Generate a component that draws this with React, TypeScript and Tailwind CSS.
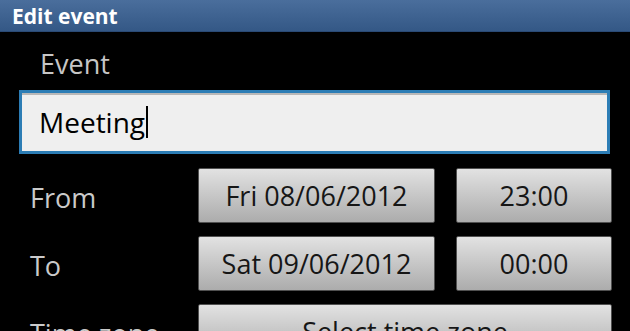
import React from "react";

const font = { fontFamily: '"Open Sans", "Noto Sans", sans-serif' };

function Btn({ children, className }: { children: React.ReactNode; className: string }) {
  return (
    <div
      className={
        "flex h-[55px] items-center justify-center rounded-[2px] border border-[#505050] bg-gradient-to-b from-[#e2e2e2] to-[#acacac] text-[27px] leading-[28px] text-[#161616] " +
        className
      }
    >
      {children}
    </div>
  );
}

function Row({ label, children }: { label: string; children: React.ReactNode }) {
  return (
    <div className="flex h-[55px] shrink-0 items-center">
      <div className="mt-[4px] w-[198px] shrink-0 pl-[30px] text-[27px] leading-[28px] text-[#cacaca]">{label}</div>
      <div className="flex flex-1 gap-[21px] pr-[18px]">{children}</div>
    </div>
  );
}

export default function App() {
  return (
    <div className="flex h-[331px] w-[630px] flex-col overflow-hidden bg-black" style={font}>
      <div className="flex h-[32px] shrink-0 items-center border-b border-[#2a4a75] bg-gradient-to-b from-[#4a6e9c] to-[#345886] pl-[12px]">
        <span className="text-[21px] font-bold leading-[20px] text-white">Edit event</span>
      </div>
      <div className="mt-[18px] shrink-0 pl-[40px] text-[27px] leading-[28px] text-[#c6c6c6]">Event</div>
      <div className="ml-[19px] mr-[20px] mt-[12px] flex h-[64px] shrink-0 items-center border-[3px] border-[#2c7db5] bg-[#efefef] pl-[17px] shadow-[inset_0_2px_0_#b8b8b8]">
        <span className="text-[28px] leading-[28px] text-black">Meeting</span>
        <span className="ml-[1px] inline-block h-[32px] w-[2px] bg-black" />
      </div>
      <div className="mt-[14px] flex shrink-0 flex-col gap-[13px]">
        <Row label="From">
          <Btn className="w-[237px]">Fri 08/06/2012</Btn>
          <Btn className="flex-1">23:00</Btn>
        </Row>
        <Row label="To">
          <Btn className="w-[237px]">Sat 09/06/2012</Btn>
          <Btn className="flex-1">00:00</Btn>
        </Row>
        <Row label="Time zone">
          <Btn className="flex-1">Select time zone</Btn>
        </Row>
      </div>
    </div>
  );
}
